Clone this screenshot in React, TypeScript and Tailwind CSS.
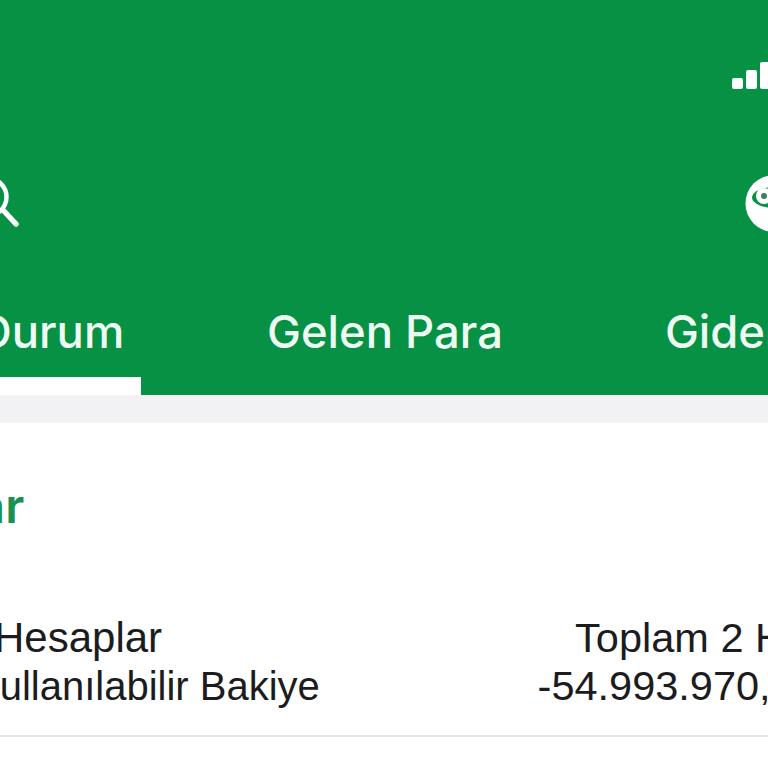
const sans = "font-['Liberation_Sans',Arial,sans-serif]";

function SearchIcon() {
  return (
    <svg width="40" height="60" viewBox="0 0 40 60" className="-ml-[20px] shrink-0" aria-hidden="true">
      <circle cx="8" cy="23" r="18.5" fill="none" stroke="#ffffff" strokeWidth="4.5" />
      <path d="M23 36 L36 50" stroke="#ffffff" strokeWidth="5.5" strokeLinecap="round" />
    </svg>
  );
}

function EyeIcon() {
  return (
    <svg width="60" height="60" viewBox="0 0 60 60" className="-mr-[37px] shrink-0" aria-hidden="true">
      <circle cx="29" cy="29.5" r="28.5" fill="#ffffff" />
      <ellipse cx="30" cy="23.5" rx="23" ry="10.5" fill="#069144" />
      <circle cx="19" cy="22" r="8" fill="#ffffff" />
      <circle cx="19" cy="22" r="3" fill="#3f7f5a" />
    </svg>
  );
}

export default function App() {
  return (
    <div className={`${sans} flex h-[768px] w-[768px] flex-col overflow-hidden bg-white`}>
      <header className="flex h-[395px] shrink-0 flex-col bg-[#069144]">
        <div className="flex h-[89px] items-end justify-end gap-[3px]">
          <span className="h-[11px] w-[11px] rounded-[2px] bg-white" />
          <span className="h-[19px] w-[11px] rounded-[2px] bg-white" />
          <span className="h-[27px] w-[8px] rounded-l-[2px] bg-white" />
        </div>
        <div className="mt-[85px] flex h-[60px] items-start justify-between">
          <SearchIcon />
          <EyeIcon />
        </div>
        <div className="mt-[71px] flex h-[90px] items-stretch whitespace-nowrap font-['Inter',sans-serif] text-[45.4px] font-medium leading-[54px] text-[#eefbf2]">
          <div className="-ml-[21px] flex w-[162px] shrink-0 flex-col justify-between border-b-[18px] border-white">
            <span>Durum</span>
          </div>
          <span className="ml-[126px] shrink-0">Gelen Para</span>
          <span className="ml-[162px] shrink-0">Giden Para</span>
        </div>
      </header>
      <div className="h-[28px] shrink-0 bg-[#f2f2f4]" />
      <main className="flex flex-1 flex-col">
        <h2 className="-ml-[183px] mt-[56px] whitespace-nowrap font-['Inter',sans-serif] text-[48px] font-semibold leading-[54px] text-[#1a9150]">Hesaplar</h2>
        <div className="mt-[81px] flex justify-between whitespace-nowrap text-[#1c1c1e]">
          <div className="-ml-[6px] flex flex-col">
            <span className="text-[42px] leading-[48px]">Hesaplar</span>
            <span className="-ml-[21px] text-[40px] leading-[48px]">Kullanılabilir Bakiye</span>
          </div>
          <div className="-mr-[111px] flex flex-col items-end">
            <span className="mr-[4px] text-[41.5px] leading-[48px]">Toplam 2 Hesap</span>
            <span className="mr-[3px] text-[41.5px] leading-[48px]">-54.993.970,00 TL</span>
          </div>
        </div>
        <div className="mt-[25px] h-[2px] bg-[#e6e6e8]" />
      </main>
    </div>
  );
}
